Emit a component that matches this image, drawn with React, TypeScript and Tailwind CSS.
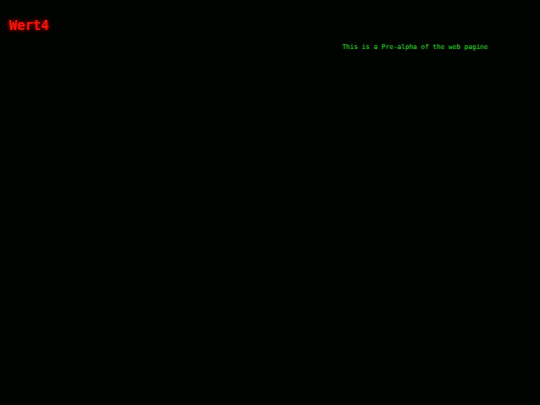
export default function App() {
  return (
    <div className="min-h-screen w-full bg-[#010301] font-['DejaVu_Sans_Mono',monospace]">
      <header className="pl-[9px] pt-[17px]">
        <h1 className="text-[13.2px] font-bold leading-[18px] text-[#f01808] [text-shadow:0_0_4px_rgba(255,0,0,0.9)]">
          Wert4
        </h1>
      </header>
      <div className="flex justify-end pr-[52px] pt-[7px]">
        <p className="text-[6.55px] leading-[10px] text-[#36c030] [text-shadow:0_0_2px_rgba(40,200,40,0.6)]">
          This is a Pre-alpha of the web pagine
        </p>
      </div>
    </div>
  )
}
